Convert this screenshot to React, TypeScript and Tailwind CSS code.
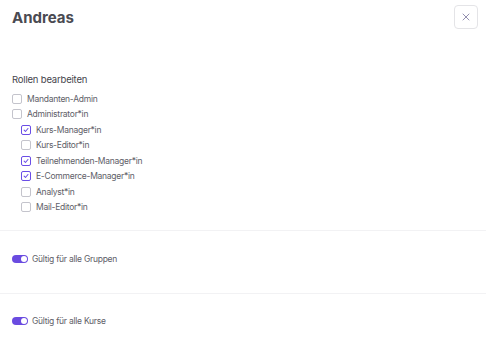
import React from "react";

const roles = [
  { label: "Mandanten-Admin", checked: false, indent: false },
  { label: "Administrator*in", checked: false, indent: false },
  { label: "Kurs-Manager*in", checked: true, indent: true },
  { label: "Kurs-Editor*in", checked: false, indent: true },
  { label: "Teilnehmenden-Manager*in", checked: true, indent: true },
  { label: "E-Commerce-Manager*in", checked: true, indent: true },
  { label: "Analyst*in", checked: false, indent: true },
  { label: "Mail-Editor*in", checked: false, indent: true },
];

function Checkbox({ checked }: { checked: boolean }) {
  return (
    <span
      className={`flex h-[10px] w-[10px] shrink-0 items-center justify-center rounded-[2px] border bg-white ${
        checked ? "border-[#6b4ee6]" : "border-[#c4c4cc]"
      }`}
    >
      {checked && (
        <svg width="6" height="6" viewBox="0 0 8 8" fill="none">
          <path d="M1.5 4.2 L3.3 6 L6.6 2" stroke="#6b4ee6" strokeWidth="1.4" strokeLinecap="round" strokeLinejoin="round" />
        </svg>
      )}
    </span>
  );
}

function Toggle() {
  return (
    <span className="flex h-[8px] w-[16px] shrink-0 items-center justify-end rounded-full bg-[#6a4be0] pr-[1px]">
      <span className="h-[6px] w-[6px] rounded-full bg-white" />
    </span>
  );
}

export default function App() {
  return (
    <div
      className="h-[341px] w-[486px] overflow-hidden bg-white text-[#606068]"
      style={{ fontFamily: "Inter, 'Noto Sans', sans-serif" }}
    >
      <div className="flex items-start justify-between pl-3 pr-[8px] pt-[5px]">
        <h1 className="mt-[3px] text-[15px] font-bold leading-[19px] text-[#4a4a52]">Andreas</h1>
        <button className="flex h-[24px] w-[24px] items-center justify-center rounded-[4px] border border-[#e4e4e7] bg-white">
          <svg width="8" height="8" viewBox="0 0 8 8" fill="none">
            <path d="M1 1 L7 7 M7 1 L1 7" stroke="#9390b0" strokeWidth="1" strokeLinecap="round" />
          </svg>
        </button>
      </div>

      <div className="px-3 pt-[44px] pb-[15px]">
        <div className="text-[9.5px] leading-[14px] tracking-[-0.02em] text-[#45454d]">Rollen bearbeiten</div>
        <div className="mt-[4px] flex flex-col">
          {roles.map((r) => (
            <div
              key={r.label}
              className={`flex h-[15.5px] items-center gap-[5px] ${r.indent ? "pl-[9px]" : ""}`}
            >
              <Checkbox checked={r.checked} />
              <span className="text-[8.5px] leading-[12px] tracking-[-0.03em]">{r.label}</span>
            </div>
          ))}
        </div>
      </div>

      <div className="h-[1px] bg-[#f2f2f4]" />

      <div className="flex h-[62px] items-start gap-[4px] px-3 pt-[24px]">
        <Toggle />
        <span className="-mt-[2px] text-[8.5px] leading-[12px] tracking-[-0.03em]">Gültig für alle Gruppen</span>
      </div>

      <div className="h-[1px] bg-[#f2f2f4]" />

      <div className="flex h-[56px] items-start gap-[4px] px-3 pt-[23px]">
        <Toggle />
        <span className="-mt-[2px] text-[8.5px] leading-[12px] tracking-[-0.03em]">Gültig für alle Kurse</span>
      </div>
    </div>
  );
}
